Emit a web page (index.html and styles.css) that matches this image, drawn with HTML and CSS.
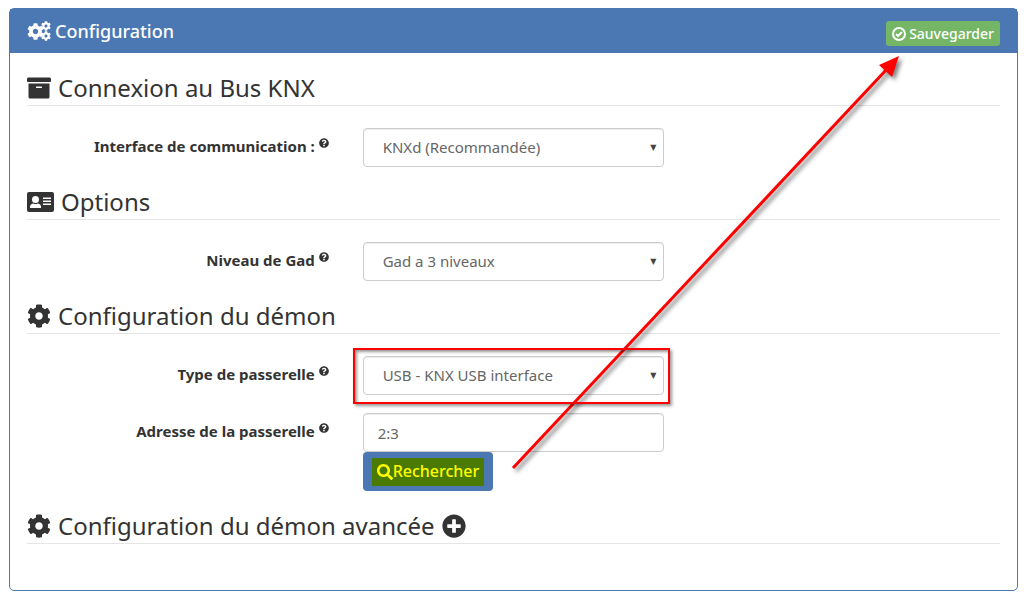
FILE: index.html
```html
<!DOCTYPE html>
<html lang="fr">
  <head>
    <meta charset="utf-8">
    <meta name="viewport" content="width=device-width, initial-scale=1">
    <title>Configuration</title>
    <link rel="stylesheet" href="styles.css">
  </head>
<body>

<!-- shared icons -->
<svg class="sprite" aria-hidden="true">
  <symbol id="cog" viewBox="0 0 512 512"><path d="M487.4 315.7l-42.6-24.6c4.3-23.2 4.3-47 0-70.2l42.6-24.6c4.9-2.8 7.1-8.6 5.5-14-11.1-35.6-30-67.8-54.7-94.6-3.8-4.1-10-5.1-14.8-2.3L380.8 110c-17.9-15.4-38.5-27.3-60.8-35.1V25.8c0-5.6-3.9-10.5-9.4-11.7-36.7-8.2-74.3-7.8-109.2 0-5.5 1.2-9.4 6.1-9.4 11.7V75c-22.2 7.9-42.8 19.8-60.8 35.1L88.7 85.5c-4.9-2.8-11-1.9-14.8 2.3-24.7 26.7-43.6 58.9-54.7 94.6-1.7 5.4.6 11.2 5.5 14L67.3 221c-4.3 23.2-4.3 47 0 70.2l-42.6 24.6c-4.9 2.8-7.1 8.6-5.5 14 11.1 35.6 30 67.8 54.7 94.6 3.8 4.1 10 5.1 14.8 2.3l42.6-24.6c17.9 15.4 38.5 27.3 60.8 35.1v49.2c0 5.6 3.9 10.5 9.4 11.7 36.7 8.2 74.3 7.8 109.2 0 5.5-1.2 9.4-6.1 9.4-11.7v-49.2c22.2-7.9 42.8-19.8 60.8-35.1l42.6 24.6c4.9 2.8 11 1.9 14.8-2.3 24.7-26.7 43.6-58.9 54.7-94.6 1.5-5.5-.7-11.3-5.6-14.1zM256 336c-44.1 0-80-35.9-80-80s35.9-80 80-80 80 35.9 80 80-35.9 80-80 80z"/></symbol>
  <symbol id="help" viewBox="0 0 512 512"><path d="M504 256c0 137-111 248-248 248S8 393 8 256C8 119.100 119 8 256 8s248 111.100 248 248zM262.700 90c-54.500 0-89.300 23-116.500 63.800-3.500 5.300-2.400 12.400 2.700 16.200l34.700 26.300c5.200 3.900 12.600 3 16.700-2.100 17.900-22.700 30.100-35.800 57.300-35.800 20.400 0 45.700 13.100 45.700 33 0 15-12.400 22.700-32.500 34C247.100 238.500 216 254.900 216 296v4c0 6.600 5.400 12 12 12h56c6.600 0 12-5.400 12-12v-1.300c0-28.500 83.200-29.600 83.200-106.700 0-58-60.200-102-116.500-102zM256 338c-25.400 0-46 20.600-46 46s20.600 46 46 46 46-20.600 46-46-20.600-46-46-46z"/></symbol>
</svg>

<main class="panel">
  <header class="panel-heading">
    <h1 class="panel-title">
      <svg class="icon-cogs" viewBox="0 0 24 20" aria-hidden="true">
        <use href="#cog" x="0" y="2" width="17" height="17"/>
        <use href="#cog" x="14" y="0" width="10" height="10"/>
        <use href="#cog" x="14" y="10" width="10" height="10"/>
      </svg>
      Configuration
    </h1>
    <button type="button" class="btn btn-save">
      <svg class="icon-save" viewBox="0 0 14 14" aria-hidden="true">
        <circle cx="7" cy="7" r="6"/>
        <path d="M4 7l2 2 4-4"/>
      </svg>
      Sauvegarder
    </button>
  </header>

  <form class="panel-body">
    <fieldset>
      <legend>
        <svg class="icon" viewBox="0 0 512 512" aria-hidden="true"><path d="M32 448c0 17.700 14.300 32 32 32h384c17.700 0 32-14.300 32-32V160H32v288zm160-212c0-6.600 5.400-12 12-12h104c6.600 0 12 5.400 12 12v8c0 6.600-5.400 12-12 12H204c-6.600 0-12-5.400-12-12v-8zM480 32H32C14.300 32 0 46.300 0 64v48c0 8.800 7.200 16 16 16h480c8.800 0 16-7.200 16-16V64c0-17.700-14.300-32-32-32z"/></svg>
        Connexion au Bus KNX
      </legend>
      <div class="form-group">
        <label for="interface">Interface de communication : <svg class="help" aria-hidden="true"><use href="#help"/></svg></label>
        <div class="select">
          <select id="interface" class="form-control"><option>KNXd (Recommandée)</option></select>
        </div>
      </div>
    </fieldset>

    <fieldset>
      <legend>
        <svg class="icon icon-card" viewBox="0 0 27 24" aria-hidden="true">
          <path fill-rule="evenodd" d="M2 2h23q2 0 2 2v16q0 2-2 2H2q-2 0-2-2V4q0-2 2-2zM8.500 6a3.500 3.500 0 1 0 0 7 3.500 3.500 0 0 0 0-7zM3 18h11v-1q0-3-3-3.500-2.500 1-5 0-3 .5-3 3.500zM16 7.500V9h8V7.500zM16 10.500V12h8v-1.500zM16 13.500V15h8v-1.500z"/>
        </svg>
        Options
      </legend>
      <div class="form-group">
        <label for="niveau">Niveau de Gad <svg class="help" aria-hidden="true"><use href="#help"/></svg></label>
        <div class="select">
          <select id="niveau" class="form-control"><option>Gad a 3 niveaux</option></select>
        </div>
      </div>
    </fieldset>

    <fieldset>
      <legend><svg class="icon" aria-hidden="true"><use href="#cog"/></svg> Configuration du démon</legend>
      <div class="form-group">
        <label for="passerelle">Type de passerelle <svg class="help" aria-hidden="true"><use href="#help"/></svg></label>
        <div class="select marked">
          <select id="passerelle" class="form-control"><option>USB - KNX USB interface</option></select>
        </div>
      </div>
      <div class="form-group">
        <label for="adresse">Adresse de la passerelle <svg class="help" aria-hidden="true"><use href="#help"/></svg></label>
        <div>
          <input type="text" id="adresse" class="form-control" value="2:3">
          <button type="button" class="btn btn-search">
            <span class="highlight"><svg class="icon-search" viewBox="0 0 512 512" aria-hidden="true"><path d="M505 442.700L405.300 343c-4.500-4.500-10.600-7-17-7H372c27.600-35.300 44-79.700 44-128C416 93.100 322.900 0 208 0S0 93.100 0 208s93.100 208 208 208c48.300 0 92.700-16.400 128-44v16.300c0 6.400 2.500 12.500 7 17l99.700 99.700c9.400 9.400 24.600 9.400 33.900 0l28.300-28.300c9.400-9.400 9.400-24.600.1-34zM208 336c-70.700 0-128-57.200-128-128 0-70.700 57.200-128 128-128 70.700 0 128 57.200 128 128 0 70.700-57.200 128-128 128z"/></svg>Rechercher</span>
          </button>
        </div>
      </div>
    </fieldset>

    <fieldset>
      <legend>
        <svg class="icon" aria-hidden="true"><use href="#cog"/></svg>
        Configuration du démon avancée
        <svg class="icon" viewBox="0 0 512 512" aria-hidden="true"><path d="M256 8C119 8 8 119 8 256s111 248 248 248 248-111 248-248S393 8 256 8zm144 276c0 6.600-5.400 12-12 12h-92v92c0 6.600-5.400 12-12 12h-56c-6.600 0-12-5.400-12-12v-92h-92c-6.600 0-12-5.400-12-12v-56c0-6.600 5.400-12 12-12h92v-92c0-6.600 5.400-12 12-12h56c6.600 0 12 5.400 12 12v92h92c6.600 0 12 5.400 12 12v56z"/></svg>
      </legend>
    </fieldset>
  </form>

  <!-- arrow from the search button to the save button -->
  <svg class="arrow" viewBox="0 0 400 430" aria-hidden="true">
    <path class="arrow-line" d="M4 421L378 22"/>
    <path class="arrow-head" d="M390 9L383 30L370 18Z"/>
  </svg>
</main>

</body>
</html>
```
FILE: styles.css
```css
* {box-sizing: border-box;}

body {margin: 8px 6px 8px 9px;background: #fff;color: #333;font-family: "Noto Sans", "Open Sans", sans-serif;font-size: 15px;line-height: 21px;}
button, input, select {font: inherit;}
svg {fill: currentColor;}
.sprite {display: none;}

.panel {position: relative;border: 1px solid #4b78b3;border-radius: 5px;}
.panel-heading {display: flex;align-items: flex-end;justify-content: space-between;height: 44px;padding: 0 17px 7px;background: #4b78b3;color: #fff;}
.panel-title {display: flex;align-items: center;gap: 4px;margin: 0;font-size: 18px;font-weight: 500;line-height: 30px;}
.icon-cogs {width: 24px;height: 20px;}
.panel-body {padding: 18px 17px 24px;}

fieldset {min-width: 0;margin: 0;padding: 0;border: 0;}
legend {display: flex;align-items: center;gap: 7px;width: 100%;height: 35px;margin-bottom: 22px;padding: 0;border-bottom: 1px solid #e5e5e5;font-size: 24px;line-height: 34px;}
.icon {width: 24px;height: 24px;}
.icon-card {width: 27px;}

.form-group {display: grid;grid-template-columns: repeat(3, 1fr);column-gap: 34px;margin-bottom: 18px;}
label {padding-top: 8px;text-align: right;font-weight: 700;}
.help {width: 10px;height: 10px;vertical-align: 4px;}
.form-control {display: block;width: 100%;height: 39px;padding: 0 14px;border: 1px solid #ccc;border-radius: 4px;background: #fff;color: #666;box-shadow: inset 0 1px 1px rgba(0, 0, 0, .075);}

.select {position: relative;}
.select select {appearance: none;padding: 0 19px;}
.select::after {content: "▼";position: absolute;top: 9px;right: 8px;font-family: "DejaVu Sans", sans-serif;font-size: 8px;pointer-events: none;color: #444;}
/* red frame round the field to fill in */
.marked::before {content: "";position: absolute;inset: -8px -6px -9px -10px;border: 2px solid #f00;box-shadow: 2px 2px 3px rgba(0, 0, 0, .4), inset 2px 2px 3px rgba(0, 0, 0, .4);pointer-events: none;z-index: 1;}

.btn {display: flex;align-items: center;border: 0;border-radius: 4px;color: #fff;cursor: pointer;}
.btn-save {gap: 3px;height: 25px;padding: 0 6px;border-radius: 3px;background: #74b566;font-size: 14px;font-weight: 500;}
.icon-save {width: 14px;height: 14px;fill: none;stroke: currentColor;stroke-width: 2;}
.btn-search {height: 39px;padding: 0 9px;background: #4b78b3;}
.highlight {display: flex;align-items: center;height: 28px;padding: 0 5px;background: #4a7a00;color: #ff0;font-size: 16px;font-weight: 500;}
.icon-search {width: 16px;height: 16px;}

.arrow {position: absolute;left: 499px;top: 38px;width: 400px;height: 430px;pointer-events: none;filter: drop-shadow(3px 3px 2px rgba(0, 0, 0, .5));}
.arrow-line {fill: none;stroke: #f00;stroke-width: 3;}
.arrow-head {fill: #f00;}
```
